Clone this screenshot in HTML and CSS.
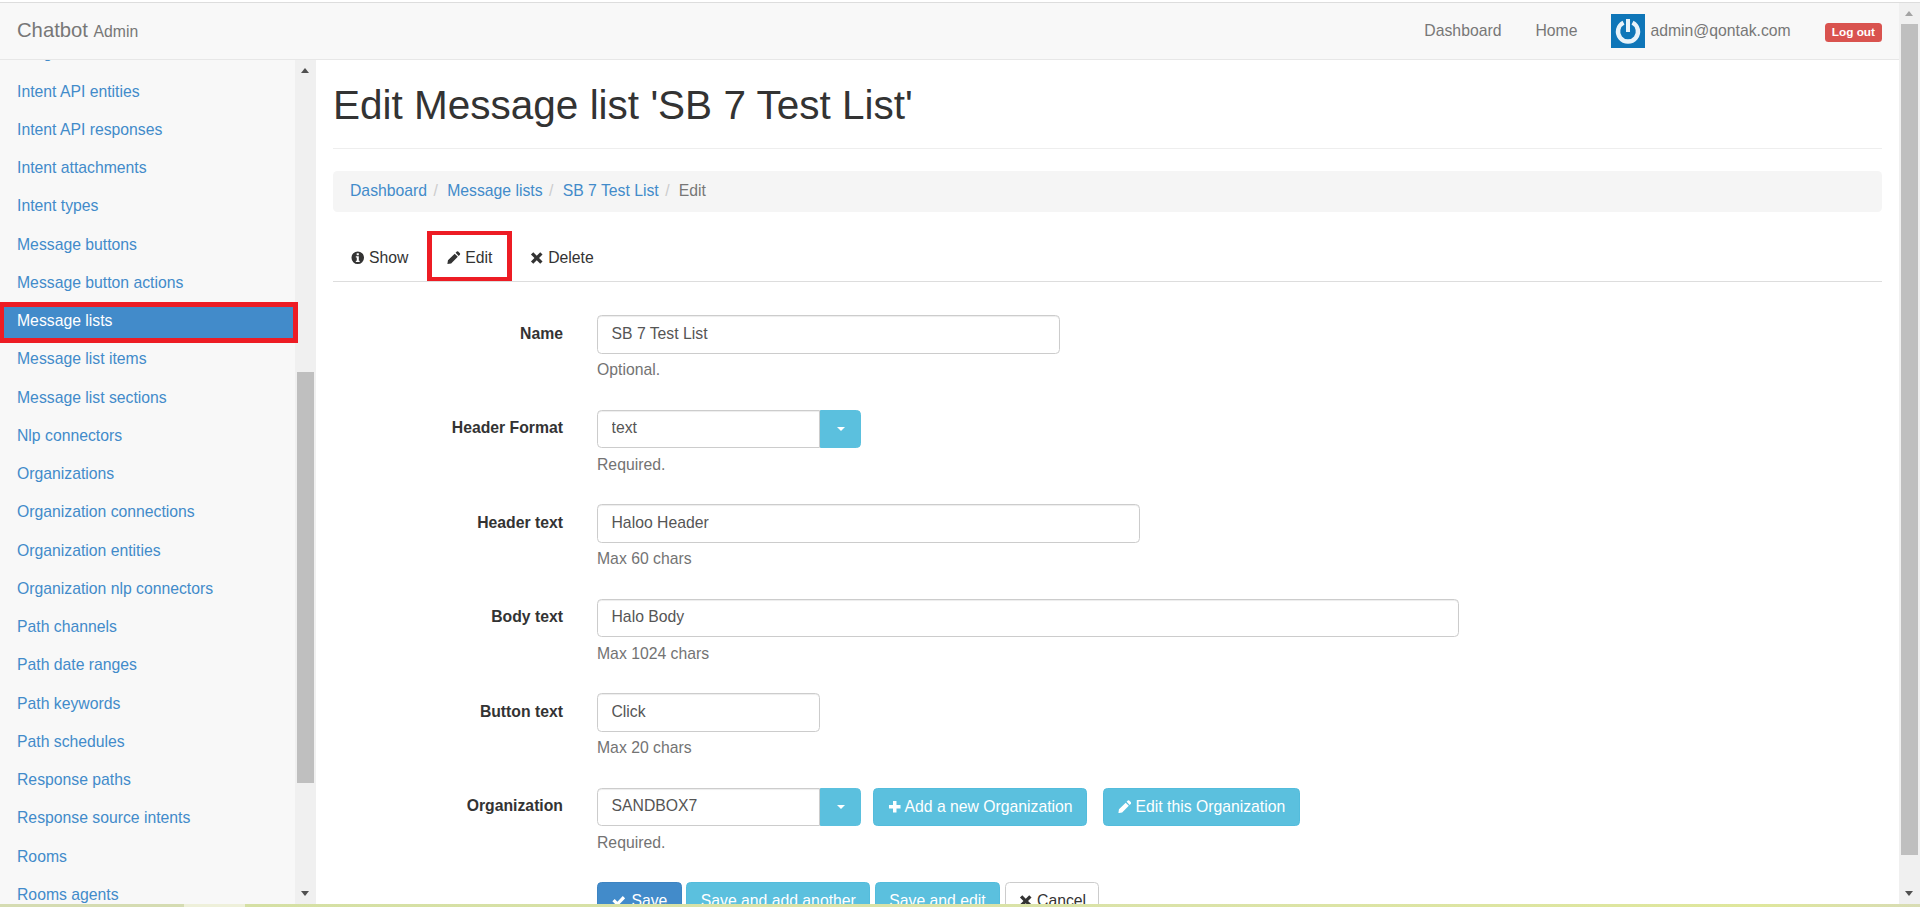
FILE: index.html
```html
<!DOCTYPE html>
<html lang="en">
<head>
  <meta charset="UTF-8">
  <title>Edit Message list 'SB 7 Test List' | Chatbot Admin</title>
  <link rel="stylesheet" href="styles.css">
</head>
<body>
  <svg class="sprite" xmlns="http://www.w3.org/2000/svg">
    <symbol id="i-info" viewBox="0 0 14 14"><path fill-rule="evenodd" d="M7 .5a6.5 6.5 0 1 1 0 13 6.5 6.5 0 0 1 0-13zM5.9 2.4v2h2.2v-2zM5 5.5v1.2h1v3.4H5v1.3h4v-1.3H8.1V5.5z"/></symbol>
    <symbol id="i-pencil" viewBox="0 0 14 14"><path d="M10.2.6a1 1 0 0 1 1.4 0l1.8 1.8a1 1 0 0 1 0 1.4l-1.3 1.3-3.2-3.2zM8 2.8l3.2 3.2L4.3 13l-3.9.6.6-3.9z"/></symbol>
    <symbol id="i-times" viewBox="0 0 14 14"><path d="M3.4 1.2 7 4.9l3.6-3.7L13 3.6 9.4 7.2l3.6 3.6-2.4 2.4L7 9.6l-3.6 3.6L1 10.8l3.6-3.6L1 3.6z"/></symbol>
    <symbol id="i-check" viewBox="0 0 14 14"><path d="M.4 7.6l2.4-2.4 2.8 2.8 5.6-5.9 2.4 2.4-8 8.3z"/></symbol>
    <symbol id="i-plus" viewBox="0 0 14 14"><path d="M5.2 1h3.6v4.2H13v3.6H8.8V13H5.2V8.8H1V5.2h4.2z"/></symbol>
  </svg>

  <div class="top-line"></div>

  <div class="page">
    <div class="app">
      <header class="navbar">
        <a class="brand" href="#">Chatbot <small>Admin</small></a>
        <nav class="nav-links">
          <a href="#">Dashboard</a>
          <a href="#">Home</a>
          <a class="user" href="#">
            <svg class="avatar" viewBox="0 0 34 34">
              <rect width="34" height="34" fill="#0f76b8"/>
              <path d="M21.5 8.6a10 10 0 1 1-9 0" fill="none" stroke="#e8f3fa" stroke-width="4.4"/>
              <path d="M17 5v13" stroke="#e8f3fa" stroke-width="4"/>
            </svg>
            admin@qontak.com
          </a>
          <a class="logout" href="#">Log out</a>
        </nav>
      </header>

      <div class="body-row">
        <aside class="sidebar">
          <ul class="side-list">
            <li><a href="#">Integrations</a></li>
            <li><a href="#">Intent API entities</a></li>
            <li><a href="#">Intent API responses</a></li>
            <li><a href="#">Intent attachments</a></li>
            <li><a href="#">Intent types</a></li>
            <li><a href="#">Message buttons</a></li>
            <li><a href="#">Message button actions</a></li>
            <li class="active"><a href="#">Message lists</a></li>
            <li><a href="#">Message list items</a></li>
            <li><a href="#">Message list sections</a></li>
            <li><a href="#">Nlp connectors</a></li>
            <li><a href="#">Organizations</a></li>
            <li><a href="#">Organization connections</a></li>
            <li><a href="#">Organization entities</a></li>
            <li><a href="#">Organization nlp connectors</a></li>
            <li><a href="#">Path channels</a></li>
            <li><a href="#">Path date ranges</a></li>
            <li><a href="#">Path keywords</a></li>
            <li><a href="#">Path schedules</a></li>
            <li><a href="#">Response paths</a></li>
            <li><a href="#">Response source intents</a></li>
            <li><a href="#">Rooms</a></li>
            <li><a href="#">Rooms agents</a></li>
          </ul>
          <div class="mark mark-side"></div>
        </aside>

        <div class="scrollbar side-scroll">
          <span class="arrow up"></span>
          <span class="thumb"></span>
          <span class="arrow down"></span>
        </div>

        <main class="content">
          <h1 class="page-title">Edit Message list 'SB 7 Test List'</h1>

          <ol class="breadcrumb">
            <li><a href="#">Dashboard</a></li>
            <li><a href="#">Message lists</a></li>
            <li><a href="#">SB 7 Test List</a></li>
            <li class="current">Edit</li>
          </ol>

          <ul class="tabs">
            <li class="tab-first"><a href="#"><svg class="icon"><use href="#i-info"/></svg> Show</a></li>
            <li class="tab-marked"><a href="#"><svg class="icon"><use href="#i-pencil"/></svg> Edit</a><div class="mark mark-tab"></div></li>
            <li><a href="#"><svg class="icon"><use href="#i-times"/></svg> Delete</a></li>
          </ul>

          <form class="edit-form">
            <div class="form-group">
              <label>Name</label>
              <div>
                <input class="input w-name" type="text" value="SB 7 Test List">
                <p class="help">Optional.</p>
              </div>
            </div>

            <div class="form-group">
              <label>Header Format</label>
              <div>
                <div class="combo">
                  <input class="input combo-input" type="text" value="text">
                  <button class="btn btn-info combo-toggle" type="button"><span class="caret"></span></button>
                </div>
                <p class="help">Required.</p>
              </div>
            </div>

            <div class="form-group">
              <label>Header text</label>
              <div>
                <input class="input w-header" type="text" value="Haloo Header">
                <p class="help">Max 60 chars</p>
              </div>
            </div>

            <div class="form-group">
              <label>Body text</label>
              <div>
                <input class="input w-body" type="text" value="Halo Body">
                <p class="help">Max 1024 chars</p>
              </div>
            </div>

            <div class="form-group">
              <label>Button text</label>
              <div>
                <input class="input w-button" type="text" value="Click">
                <p class="help">Max 20 chars</p>
              </div>
            </div>

            <div class="form-group">
              <label>Organization</label>
              <div>
                <div class="combo-row">
                  <div class="combo">
                    <input class="input combo-input" type="text" value="SANDBOX7">
                    <button class="btn btn-info combo-toggle" type="button"><span class="caret"></span></button>
                  </div>
                  <a class="btn btn-info add-org" href="#"><svg class="icon"><use href="#i-plus"/></svg> Add a new Organization</a>
                  <a class="btn btn-info" href="#"><svg class="icon"><use href="#i-pencil"/></svg> Edit this Organization</a>
                </div>
                <p class="help">Required.</p>
              </div>
            </div>

            <div class="form-group">
              <span></span>
              <div class="actions">
                <button class="btn btn-primary btn-save" type="button"><svg class="icon"><use href="#i-check"/></svg> Save</button>
                <button class="btn btn-info" type="button">Save and add another</button>
                <button class="btn btn-info" type="button">Save and edit</button>
                <button class="btn btn-default btn-cancel" type="button"><svg class="icon"><use href="#i-times"/></svg> Cancel</button>
              </div>
            </div>
          </form>
        </main>
      </div>
    </div>

    <div class="scrollbar page-scroll">
      <span class="arrow up light"></span>
      <span class="thumb"></span>
      <span class="arrow down"></span>
    </div>
  </div>

  <div class="bottom-strip"></div>
</body>
</html>
```

FILE: styles.css
```css
* {
  box-sizing: border-box;
}

html, body {
  height: 100%;
}

body {
  margin: 0;
  display: flex;
  flex-direction: column;
  overflow: hidden;
  font-family: "Liberation Sans", Arial, sans-serif;
  font-size: 15.75px;
  line-height: 22.5px;
  color: #333;
  background: #fff;
}

a {
  color: #428bca;
  text-decoration: none;
}

.sprite {
  display: none;
}

.icon {
  width: 13.5px;
  height: 13.5px;
  fill: currentColor;
  vertical-align: -1.5px;
}

/* window edges */
.top-line {
  flex: none;
  height: 3px;
  background: #fff;
  border-bottom: 1px solid #ddd;
}

.bottom-strip {
  flex: none;
  height: 3px;
  background: linear-gradient(to right, #d5dcb2 0, #d5dcb2 184px, #eef0da 184px, #eef0da 245px, #d5e0a4 245px, #dbe3a8 1200px, #dfe79c 1760px, #d8dcb4 1920px);
}

.page {
  flex: 1;
  min-height: 0;
  display: flex;
}

.app {
  flex: 1;
  min-width: 0;
  display: flex;
  flex-direction: column;
}

/* navbar */
.navbar {
  flex: none;
  height: 57px;
  display: flex;
  align-items: center;
  justify-content: space-between;
  padding: 0 17px;
  background: #f8f8f8;
  border-bottom: 1px solid #e7e7e7;
}

.brand {
  font-size: 20.25px;
  color: #777;
}

.brand small {
  font-size: 15.75px;
}

.nav-links {
  display: flex;
  align-items: center;
  gap: 34px;
}

.nav-links a {
  color: #777;
}

.user {
  display: flex;
  align-items: center;
  gap: 5px;
}

.avatar {
  width: 34px;
  height: 34px;
}

.nav-links .logout {
  margin-top: 3px;
  padding: 0 7px;
  font-size: 11.8px;
  font-weight: bold;
  line-height: 19px;
  color: #fff;
  background: #d9534f;
  border-radius: 3.5px;
}

.body-row {
  flex: 1;
  min-height: 0;
  display: flex;
}

/* sidebar */
.sidebar {
  flex: none;
  width: 295px;
  position: relative;
  background: #f8f8f8;
}

.side-list {
  height: 100%;
  margin: 0;
  padding: 0;
  list-style: none;
  overflow: hidden;
}

.side-list li:first-child {
  margin-top: -25.4px;
}

.side-list a {
  display: block;
  height: 38.25px;
  padding: 7.875px 17px;
}

.side-list .active a {
  background: #428bca;
  color: #fff;
}

/* red annotation boxes from the screenshot */
.mark {
  position: absolute;
  border: 5px solid #ed1c24;
  pointer-events: none;
}

.mark-side {
  top: 242px;
  left: 0;
  width: 298px;
  height: 41px;
  border-left-width: 4px;
}

.mark-tab {
  top: -3px;
  left: 0;
  right: 0;
  bottom: 0;
  border-width: 4px 5px;
}

/* fake scrollbars */
.scrollbar {
  flex: none;
  width: 21px;
  display: flex;
  flex-direction: column;
  align-items: center;
  background: #f0f0f0;
}

.thumb {
  width: 17px;
  background: #bfbfbf;
}

.arrow {
  flex: none;
  width: 21px;
  height: 21px;
  position: relative;
}

.arrow::after {
  content: "";
  position: absolute;
  left: 6px;
  border-left: 4.5px solid transparent;
  border-right: 4.5px solid transparent;
}

.arrow.up::after {
  top: 8px;
  border-bottom: 5px solid #505050;
}

.arrow.up.light::after {
  border-bottom-color: #a3a3a3;
}

.arrow.down {
  margin-top: auto;
}

.arrow.down::after {
  top: 8px;
  border-top: 5px solid #505050;
}

.side-scroll .thumb {
  margin-top: 291px;
  height: 411px;
}

.page-scroll .thumb {
  height: 831px;
}

/* main column */
.content {
  flex: 1;
  min-width: 0;
  padding: 0 17px;
  overflow: hidden;
}

.page-title {
  margin: 23px 0 22.5px;
  padding-bottom: 20px;
  font-size: 40.5px;
  font-weight: 500;
  line-height: 44.5px;
  border-bottom: 1px solid #eee;
}

.breadcrumb {
  display: flex;
  margin: 0;
  padding: 9px 17px;
  list-style: none;
  background: #f5f5f5;
  border-radius: 4.5px;
}

.breadcrumb li + li::before {
  content: "/";
  padding: 0 9.2px 0 6.5px;
  color: #ccc;
}

.breadcrumb .current {
  color: #777;
}

.tabs {
  display: flex;
  margin: 22.5px 0 33.25px;
  padding: 0;
  list-style: none;
  border-bottom: 1px solid #ddd;
}

.tabs li {
  position: relative;
}

.tabs a {
  display: block;
  padding: 13px 18px 11.5px;
  color: #333;
}

.tabs .tab-first a {
  padding-right: 19px;
}

.tabs .tab-marked a {
  padding-left: 20px;
  padding-right: 20px;
}

/* form */
.form-group {
  display: grid;
  grid-template-columns: 230px 1fr;
  column-gap: 34px;
  margin-bottom: 16.875px;
}

.form-group label {
  padding-top: 7.5px;
  font-weight: bold;
  text-align: right;
}

.input {
  display: block;
  height: 38.25px;
  padding: 6px 13.5px 7.5px;
  font: inherit;
  color: #555;
  background: #fff;
  border: 1px solid #ccc;
  border-radius: 4.5px;
  box-shadow: inset 0 1px 1px rgba(0, 0, 0, .075);
}

.w-name { width: 462.5px; }
.w-header { width: 543px; }
.w-body { width: 862px; }
.w-button { width: 223px; }

.help {
  margin: 5.625px 0 11.25px;
  color: #737373;
}

.btn {
  display: inline-block;
  height: 38.25px;
  padding: 6.75px 13.5px;
  font: inherit;
  white-space: nowrap;
  border: 1px solid #53bcdc;
  border-radius: 4.5px;
  cursor: pointer;
}

.btn-info {
  color: #fff;
  background: #5bc0de;
}

.btn-primary {
  color: #fff;
  background: #428bca;
  border-color: #3d84c2;
}

.btn-default {
  color: #333;
  background: #fff;
  border-color: #ccc;
}

.btn-save .icon {
  margin-right: 2px;
}

.btn-cancel {
  padding-right: 12px;
}

.combo {
  display: flex;
  width: 264px;
}

.combo-input {
  flex: 1;
  min-width: 0;
  border-radius: 4.5px 0 0 4.5px;
}

.combo-toggle {
  flex: none;
  width: 41px;
  padding: 0;
  border-color: #5bc0de;
  border-radius: 0 4.5px 4.5px 0;
}

.caret {
  display: block;
  width: 0;
  margin: 0 auto;
  border-top: 4.5px solid #fff;
  border-left: 4.5px solid transparent;
  border-right: 4.5px solid transparent;
}

.combo-row {
  display: flex;
  gap: 16px;
}

.combo-row .add-org {
  margin-left: -4px;
}

.actions {
  display: flex;
  gap: 4.5px;
}
```
